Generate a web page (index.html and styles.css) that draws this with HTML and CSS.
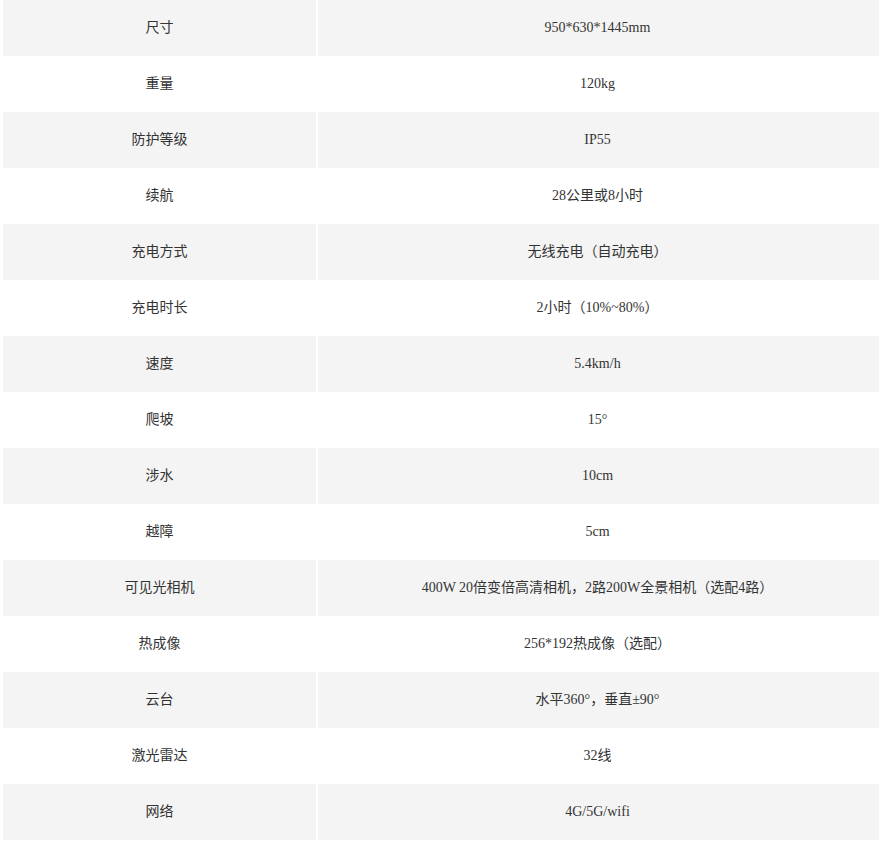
FILE: index.html
```html
<!DOCTYPE html>
<html lang="zh-CN">
<head>
<meta charset="utf-8">
<title>参数</title>
<link rel="stylesheet" href="styles.css">
</head>
<body>
<div class="spec">
  <div class="row"><div class="cell">尺寸</div><div class="cell val">950*630*1445mm</div></div>
  <div class="row"><div class="cell">重量</div><div class="cell val">120kg</div></div>
  <div class="row"><div class="cell">防护等级</div><div class="cell val">IP55</div></div>
  <div class="row"><div class="cell">续航</div><div class="cell val">28公里或8小时</div></div>
  <div class="row"><div class="cell">充电方式</div><div class="cell val">无线充电（自动充电）</div></div>
  <div class="row"><div class="cell">充电时长</div><div class="cell val">2小时（10%~80%）</div></div>
  <div class="row"><div class="cell">速度</div><div class="cell val">5.4km/h</div></div>
  <div class="row"><div class="cell">爬坡</div><div class="cell val">15°</div></div>
  <div class="row"><div class="cell">涉水</div><div class="cell val">10cm</div></div>
  <div class="row"><div class="cell">越障</div><div class="cell val">5cm</div></div>
  <div class="row"><div class="cell">可见光相机</div><div class="cell val">400W 20倍变倍高清相机，2路200W全景相机（选配4路）</div></div>
  <div class="row"><div class="cell">热成像</div><div class="cell val">256*192热成像（选配）</div></div>
  <div class="row"><div class="cell">云台</div><div class="cell val">水平360°，垂直±90°</div></div>
  <div class="row"><div class="cell">激光雷达</div><div class="cell val">32线</div></div>
  <div class="row"><div class="cell">网络</div><div class="cell val">4G/5G/wifi</div></div>
</div>
</body>
</html>
```
FILE: styles.css
```css
html, body {
  margin: 0;
  padding: 0;
  background: #ffffff;
}

.spec {
  padding-left: 3px;
  display: flex;
  flex-direction: column;
  font-family: "Liberation Serif", "Noto Sans CJK SC", serif;
  font-size: 14px;
  color: #333333;
}

.row {
  display: grid;
  grid-template-columns: 313px 561px;
  column-gap: 2px;
  height: 56px;
}

.cell {
  display: flex;
  align-items: center;
  justify-content: center;
  line-height: 20px;
  white-space: nowrap;
}

.val {
  padding-right: 2px;
}

.row:nth-child(odd) .cell {
  background: #f4f4f4;
}
```
